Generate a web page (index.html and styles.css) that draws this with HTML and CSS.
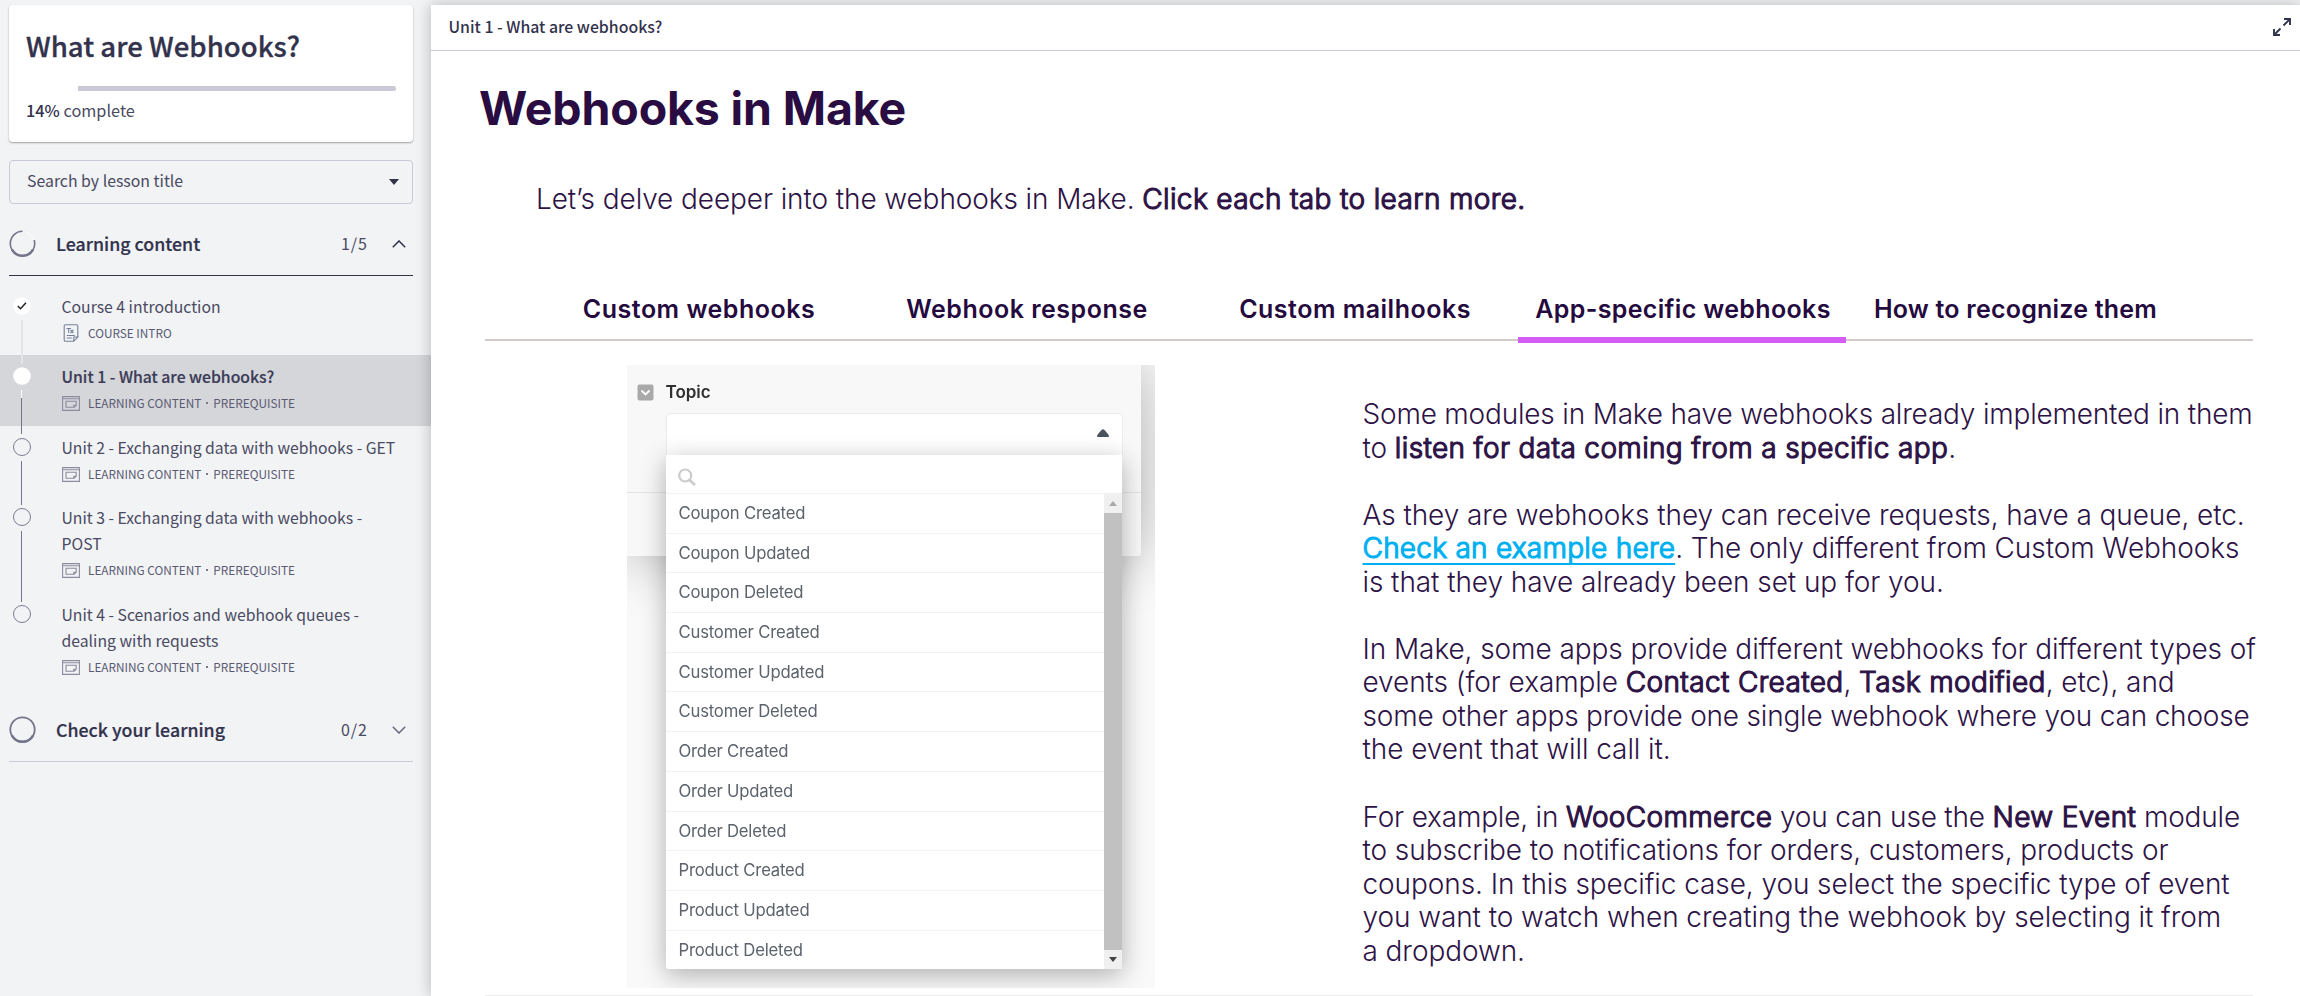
FILE: index.html
```html
<!DOCTYPE html>
<html lang="en">
<head>
<meta charset="utf-8">
<title>What are Webhooks?</title>
<link rel="stylesheet" href="styles.css">
</head>
<body>
<svg class="defs" width="0" height="0">
  <symbol id="lesson" viewBox="0 0 18 15"><path d="M.6.6h16.800v13.800H.6zM.6 2.800h16.800M4 5.300h10.200v4l-2 2H4zM14 9.300h-2.200v2" fill="none" stroke="#8b8b9e" stroke-width="1.100"/></symbol>
</svg>
<div class="app">
  <aside class="sidebar">
    <section class="card">
      <h1 class="course">What are Webhooks?</h1>
      <div class="progress"><div class="bar"></div></div>
      <p class="percent"><strong>14%</strong> complete</p>
    </section>
    <div class="search"><span>Search by lesson title</span><svg width="10" height="6" viewBox="0 0 10 6"><path d="M0 0h10L5 6z" fill="#32324d"/></svg></div>
    <div class="section open">
      <svg width="27" height="27" viewBox="0 0 27 27"><circle cx="13.500" cy="13.500" r="12.200" fill="none" stroke="#74748a" stroke-width="1.600"/><path d="M13.500 1.300A12.200 12.200 0 0 1 25.200 10" fill="none" stroke="#f8f9fa" stroke-width="2.400"/><path d="M3 19.600a12 12 0 0 0 21 0" fill="none" stroke="#74748a" stroke-width="2.400"/></svg>
      <span class="name">Learning content</span><span class="count">1/5</span>
      <svg width="14" height="8" viewBox="0 0 14 8"><path d="M.8 7.300L7 1l6.200 6.300" fill="none" stroke="#32324d" stroke-width="1.500"/></svg>
    </div>
    <ol class="lessons">
      <li class="lesson done">
        <div class="rail"><svg class="dot" width="18" height="18" viewBox="0 0 18 18"><circle cx="9" cy="9" r="8.700" fill="#fff"/><path d="M4.800 9l2.700 2.700 5.500-6" fill="none" stroke="#222" stroke-width="1.500"/></svg><i class="line"></i></div>
        <div class="info"><p class="title">Course 4 introduction</p>
        <p class="meta"><svg width="18" height="18" viewBox="0 0 18 18"><path d="M15.800 13V2a1.300 1.300 0 0 0-1.300-1.300h-11A1.300 1.300 0 0 0 2.200 2v14a1.300 1.300 0 0 0 1.300 1.300h8.300l4-4.300h-4v4M4.800 11.500h8M4.800 14h5M4.500 4.500h4.500M6.700 4.500v4.500M8.600 6l2.800 3M11.400 6L8.600 9" fill="none" stroke="#74809a" stroke-width="1.100"/></svg><span>COURSE INTRO</span></p></div>
      </li>
      <li class="lesson active">
        <div class="rail"><svg class="dot" width="18" height="18" viewBox="0 0 18 18"><circle cx="9" cy="9" r="8.800" fill="#fff"/></svg><i class="line"></i></div>
        <div class="info"><p class="title">Unit 1 - What are webhooks?</p>
        <p class="meta"><svg width="18" height="15"><use href="#lesson"/></svg><span>LEARNING CONTENT</span><i class="sep"></i><span>PREREQUISITE</span></p></div>
      </li>
      <li class="lesson">
        <div class="rail"><i class="dot hollow"></i><i class="line"></i></div>
        <div class="info"><p class="title">Unit 2 - Exchanging data with webhooks - GET</p>
        <p class="meta"><svg width="18" height="15"><use href="#lesson"/></svg><span>LEARNING CONTENT</span><i class="sep"></i><span>PREREQUISITE</span></p></div>
      </li>
      <li class="lesson tall">
        <div class="rail"><i class="dot hollow"></i><i class="line"></i></div>
        <div class="info"><p class="title">Unit 3 - Exchanging data with webhooks -<br>POST</p>
        <p class="meta"><svg width="18" height="15"><use href="#lesson"/></svg><span>LEARNING CONTENT</span><i class="sep"></i><span>PREREQUISITE</span></p></div>
      </li>
      <li class="lesson tall">
        <div class="rail"><i class="dot hollow"></i></div>
        <div class="info"><p class="title">Unit 4 - Scenarios and webhook queues -<br>dealing with requests</p>
        <p class="meta"><svg width="18" height="15"><use href="#lesson"/></svg><span>LEARNING CONTENT</span><i class="sep"></i><span>PREREQUISITE</span></p></div>
      </li>
    </ol>
    <div class="section closed">
      <svg width="27" height="27" viewBox="0 0 27 27"><circle cx="13.500" cy="13.500" r="12.200" fill="none" stroke="#74748a" stroke-width="1.800"/><path d="M3 19.600a12 12 0 0 0 21 0" fill="none" stroke="#74748a" stroke-width="2.400"/></svg>
      <span class="name">Check your learning</span><span class="count">0/2</span>
      <svg width="14" height="8" viewBox="0 0 14 8"><path d="M.8.7L7 7 13.200.7" fill="none" stroke="#666680" stroke-width="1.500"/></svg>
    </div>
  </aside>
  <main class="main">
    <header class="topbar"><span>Unit 1 - What are webhooks?</span>
      <svg width="18" height="18" viewBox="0 0 18 18"><path d="M10.500 7.500L16.500 1.500M11 1h6v6M7.500 10.500L1.500 16.500M1 11v6h6" fill="none" stroke="#32324d" stroke-width="1.900"/></svg>
    </header>
    <h2 class="heading">Webhooks in Make</h2>
    <p class="intro">Let’s delve deeper into the webhooks in Make. <b>Click each tab to learn more.</b></p>
    <nav class="tabs">
      <a class="tab">Custom webhooks</a>
      <a class="tab">Webhook response</a>
      <a class="tab">Custom mailhooks</a>
      <a class="tab selected">App-specific webhooks</a>
      <a class="tab tight">How to recognize them</a>
    </nav>
    <div class="content">
      <figure class="shot">
        <div class="panel">
          <div class="topic"><svg width="17" height="17" viewBox="0 0 17 17"><rect x=".5" y=".5" width="16" height="16" rx="2" fill="#a9a9a9"/><path d="M4.500 6.500l4 4 4-4" fill="none" stroke="#fff" stroke-width="1.800"/></svg><span>Topic</span></div>
          <div class="select"><svg width="12" height="8" viewBox="0 0 12 8"><path d="M0 7q0-1 4.500-6Q6-.6 7.500 1 12 6 12 7q0 1-1 1H1Q0 8 0 7z" fill="#4b535b"/></svg></div>
        </div>
        <div class="dropdown">
          <div class="find"><svg width="18" height="18" viewBox="0 0 18 18"><circle cx="7.200" cy="7.500" r="6" fill="none" stroke="#cbcbcb" stroke-width="2.200"/><path d="M11.500 12l5.500 5" stroke="#cbcbcb" stroke-width="2.600"/></svg></div>
          <div class="body">
            <ul class="options">
              <li>Coupon Created</li><li>Coupon Updated</li><li>Coupon Deleted</li>
              <li>Customer Created</li><li>Customer Updated</li><li>Customer Deleted</li>
              <li>Order Created</li><li>Order Updated</li><li>Order Deleted</li>
              <li>Product Created</li><li>Product Updated</li><li>Product Deleted</li>
            </ul>
            <div class="scroll"><svg width="18" height="20" viewBox="0 0 18 20"><path d="M5 13l4-5 4 5z" fill="#aaa"/></svg><i class="thumb"></i><svg width="18" height="19" viewBox="0 0 18 19"><path d="M5 7l4 5 4-5z" fill="#444"/></svg></div>
          </div>
        </div>
      </figure>
      <article class="copy">
        <p><span class="snug">Some modules in Make have webhooks already implemented in them</span><br>to <b>listen for data coming from a specific app</b>.</p>
        <p>As they are webhooks they can receive requests, have a queue, etc.<br><a class="link">Check an example here</a>. The only different from Custom Webhooks<br>is that they have already been set up for you.</p>
        <p>In Make, some apps provide different webhooks for different types of<br>events (for example <b>Contact Created</b>, <b>Task modified</b>, etc), and<br><span class="snug">some other apps provide one single webhook where you can choose</span><br>the event that will call it.</p>
        <p><span class="snug">For example, in <b>WooCommerce</b> you can use the <b>New Event</b> module</span><br>to subscribe to notifications for orders, customers, products or<br>coupons. In this specific case, you select the specific type of event<br>you want to watch when creating the webhook by selecting it from<br>a dropdown.</p>
      </article>
    </div>
    <hr class="rule">
  </main>
</div>
</body>
</html>
```
FILE: styles.css
```css
* { box-sizing: border-box; margin: 0; padding: 0; }
body { width: 2300px; height: 996px; overflow: hidden; background: #f1f3f5; color: #32324d; font-family: "Noto Sans CJK SC", sans-serif; }
ul, ol { list-style: none; }
svg { display: block; flex: none; }
.defs { position: absolute; }
.app { display: flex; height: 996px; padding-top: 5px; }

/* Sidebar */
.sidebar { width: 431px; flex: none; display: flex; flex-direction: column; }
.card { flex: none; margin: 0 18px 0 9px; height: 137px; padding: 23px 17px 0 17px; background: #fff; border-radius: 4px; box-shadow: 0 1px 2px rgba(0,0,0,.35); }
.course { font-size: 27.600px; line-height: 34px; font-weight: 500; white-space: nowrap; -webkit-text-stroke: .300px currentColor; }
.progress { margin-top: 24px; height: 5px; padding-left: 52px; }
.bar { height: 5px; background: #c9cad6; border-radius: 0 3px 3px 0; }
.percent { margin-top: 7px; font-size: 16.300px; line-height: 24px; color: #4a4a62; }
.percent strong { font-weight: 500; color: #32324d; }
.search { flex: none; margin: 18px 18px 0 9px; height: 44px; padding: 0 13px 0 17px; border: 1px solid #c9cad6; border-radius: 4px; display: flex; align-items: center; justify-content: space-between; font-size: 15.850px; line-height: 24px; color: #4a4a62; }
.search span { margin-bottom: 3px; }
.section { flex: none; margin: 0 18px 0 9px; height: 72px; display: flex; align-items: center; padding: 8px 7px 0 0; }
.open { border-bottom: 1px solid #32324d; }
.closed { border-bottom: 1px solid #c9cad6; }
.name { margin: 0 0 1px 20px; flex: 1; font-size: 17.800px; line-height: 24px; font-weight: 500; -webkit-text-stroke: .200px currentColor; }
.count { font-size: 16px; line-height: 24px; letter-spacing: 1px; margin: 0 24px 1px 0; color: #4a4a62; }
.lessons { padding-top: 9px; }
.lesson { display: flex; height: 70px; }
.tall { height: 97px; }
.rail { width: 61.500px; flex: none; padding: 12px 0 0 13px; }
.dot { display: block; width: 18px; height: 18px; }
.hollow { border: 1px solid #7d7d92; border-radius: 50%; }
.line { display: block; width: 1px; height: 44px; margin: 5px 0 0 8px; background: #74748a; }
.tall .line { height: 71px; }
.done .line { width: 2px; background: #e3e4e8; }
.active .line { background: linear-gradient(#fff 0 8px, #74748a 8px); }
.info { padding-top: 9px; white-space: nowrap; }
.title { font-size: 15.750px; line-height: 26px; color: #4a4a62; }
.meta { display: flex; align-items: center; height: 26px; font-size: 11.800px; line-height: 18px; color: #5a5a72; }
.meta svg { margin-right: 8.500px; }
.meta span { margin-bottom: 1px; }
.sep { width: 2px; height: 2px; margin: 0 5px 0 5px; background: #77778a; }
.active { height: 71px; background: #d5d6da; }
.active .title { font-weight: 500; color: #3c3c58; -webkit-text-stroke: .200px currentColor; }

/* Main column */
.main { flex: 1; background: #fff; box-shadow: 0 0 14px rgba(0,0,0,.25); }
.topbar { height: 46px; padding: 0 9px 0 17.500px; border-bottom: 1px solid #c9cad6; display: flex; justify-content: space-between; align-items: center; font-size: 15.850px; line-height: 24px; font-weight: 500; }
.topbar span, .topbar svg { margin-bottom: 1px; }
.heading { padding: 27px 0 0 48px; font: 700 46.500px/60px Inter, sans-serif; letter-spacing: -.150px; color: #290d42; }
.intro { padding: 44px 0 0 105px; font: 300 28px/34px Inter, sans-serif; letter-spacing: -.100px; color: #2d1346; white-space: nowrap; }
b, .link { font-weight: inherit; letter-spacing: .360px; -webkit-text-stroke: 1.200px currentColor; }
.tabs { display: grid; grid-template-columns: repeat(5, 328px); margin: 60px 47px 0 54px; padding-left: 49px; height: 65px; border-bottom: 2px solid #d0cac8; font: 600 25px/30px Inter, sans-serif; letter-spacing: .500px; color: #240a3e; white-space: nowrap; }
.tab { position: relative; padding: 18px 0 0 2px; text-align: center; }
.tight { padding-left: 11px; letter-spacing: .220px; }
.selected { letter-spacing: .350px; }
.selected::after { content: ""; position: absolute; left: 0; right: 0; bottom: -4px; height: 6px; background: #d45cf5; }
.content { display: flex; height: 654px; }
.rule { height: 1px; border: 0; margin: 0 47px 0 54px; background: #ececec; }

/* Dropdown illustration */
.shot { position: relative; flex: none; margin: 24px 0 0 195.500px; width: 528px; height: 623px; background: #f9f9f9; font-family: Inter, sans-serif; overflow: hidden; filter: blur(.7px); }
.panel { width: 514px; height: 191px; padding: 18px 18px 0 10px; border-radius: 0 0 4px 0; background: linear-gradient(#f8f8f8 127px, #e4e4e4 127px 128px, #f8f8f8 128px); box-shadow: 0 0 60px rgba(0,0,0,.3); }
.topic { display: flex; align-items: center; gap: 12px; height: 18px; font-size: 17px; line-height: 18px; font-weight: 600; color: #303030; }
.select { margin: 12px 0 0 29px; height: 46px; padding: 15px 13px 0 0; display: flex; justify-content: flex-end; border: 1px solid #ececec; border-radius: 4px; background: #fff; }
.dropdown { position: absolute; left: 39.500px; top: 90px; width: 456px; height: 514px; background: #fff; border-radius: 0 0 3px 3px; box-shadow: 0 6px 26px rgba(0,0,0,.3); }
.find { height: 38px; padding: 13px 0 0 12px; }
.body { display: flex; height: 476px; }
.options { flex: 1; }
.options li { height: 39.700px; padding-left: 12.500px; border-top: 1px solid #f3f3f3; font-size: 16.700px; line-height: 39px; letter-spacing: -.200px; color: #5c636c; }
.scroll { width: 18px; background: #f0f0f0; display: flex; flex-direction: column; }
.thumb { flex: 1; background: #c1c1c1; }

/* Text column */
.copy { margin: 57px 0 0 208px; font: 300 28px/33.550px Inter, sans-serif; letter-spacing: -.080px; color: #2d1346; white-space: nowrap; }
.copy p { margin-bottom: 33.550px; }
.copy .snug { letter-spacing: -.190px; }
.copy .link { color: #00b0f0; letter-spacing: .250px; text-decoration: underline 2px; text-underline-offset: 5px; text-decoration-skip-ink: none; }
```
